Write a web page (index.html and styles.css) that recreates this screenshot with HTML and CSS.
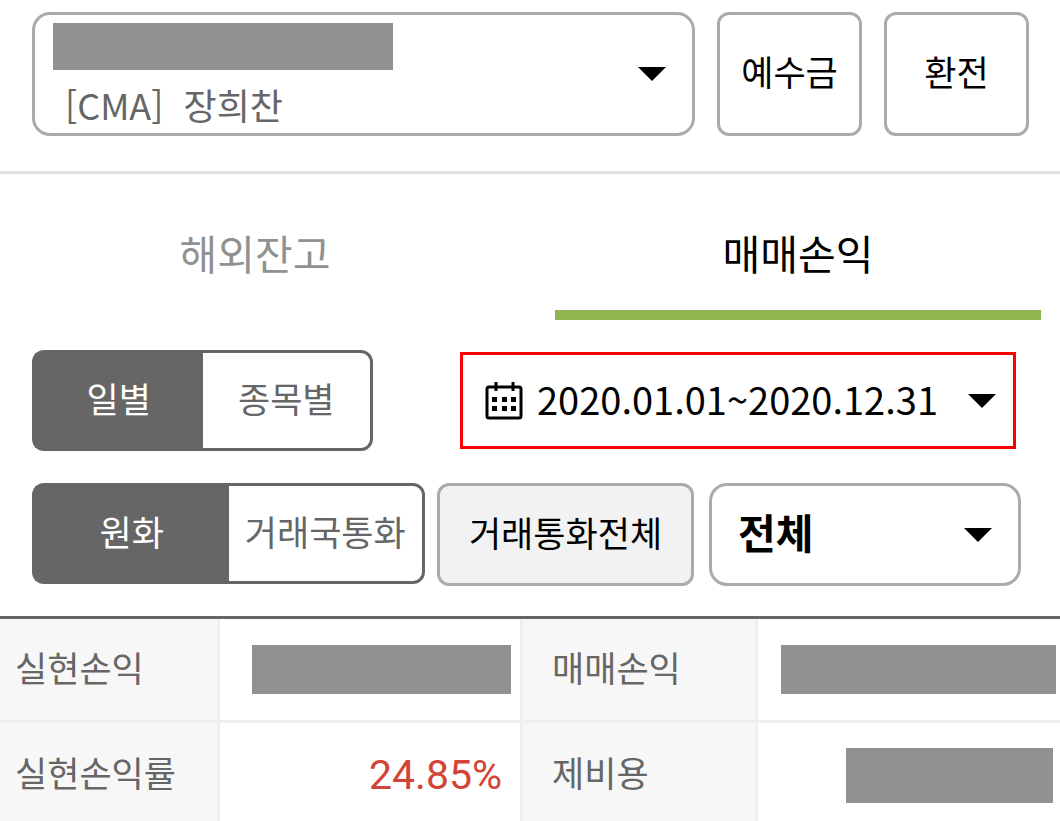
FILE: index.html
```
<!DOCTYPE html>
<html lang="ko">
<head>
  <meta charset="UTF-8" />
  <meta name="viewport" content="width=device-width, initial-scale=1" />
  <title>매매손익</title>
  <link rel="stylesheet" href="styles.css">
</head>
<body>
  <header class="account-bar">
    <div class="select-box account">
      <select class="account-select" aria-label="계좌 선택">
        <option>[CMA]&nbsp; 장희찬</option>
      </select>
      <span class="mask mask-account"></span>
      <svg class="caret" viewBox="0 0 28 14" aria-hidden="true"><path d="M0 0h28L14 14z" /></svg>
    </div>
    <button type="button" class="btn">예수금</button>
    <button type="button" class="btn">환전</button>
  </header>

  <nav class="tabs">
    <a href="#balance" class="tab">해외잔고</a>
    <a href="#profit" class="tab active">매매손익</a>
  </nav>

  <main>
    <div class="filters">
      <div class="filter-row">
        <div class="toggle toggle-period">
          <button type="button" class="on" aria-pressed="true">일별</button>
          <button type="button" aria-pressed="false">종목별</button>
        </div>
        <button type="button" class="date-range">
          <svg class="calendar" viewBox="0 0 38 38" aria-hidden="true">
            <rect x="2" y="5" width="34" height="31" rx="2" fill="none" stroke="#000" stroke-width="3" />
            <path d="M11 0v9M28 0v9" stroke="#000" stroke-width="3" />
            <path d="M7 15h5v5H7zM17 15h5v5h-5zM26 15h5v5h-5zM7 24h5v5H7zM17 24h5v5h-5zM26 24h5v5h-5z" />
          </svg>
          <span>2020.01.01~2020.12.31</span>
          <svg class="caret" viewBox="0 0 28 14" aria-hidden="true"><path d="M0 0h28L14 14z" /></svg>
        </button>
      </div>

      <div class="filter-row currency-row">
        <div class="toggle toggle-currency">
          <button type="button" class="on" aria-pressed="true">원화</button>
          <button type="button" aria-pressed="false">거래국통화</button>
        </div>
        <button type="button" class="btn btn-gray">거래통화전체</button>
        <div class="select-box market">
          <select class="market-select" aria-label="구분">
            <option>전체</option>
          </select>
          <svg class="caret" viewBox="0 0 28 14" aria-hidden="true"><path d="M0 0h28L14 14z" /></svg>
        </div>
      </div>
    </div>

    <table class="summary">
      <colgroup>
        <col class="col-label">
        <col class="col-value">
        <col class="col-label2">
        <col>
      </colgroup>
      <tr>
        <th scope="row">실현손익</th>
        <td><span class="mask mask-realized"></span></td>
        <th scope="row">매매손익</th>
        <td><span class="mask mask-trade"></span></td>
      </tr>
      <tr>
        <th scope="row">실현손익률</th>
        <td class="rate">24.85%</td>
        <th scope="row">제비용</th>
        <td><span class="mask mask-cost"></span></td>
      </tr>
    </table>
  </main>
</body>
</html>
```
FILE: styles.css
```
* {
  box-sizing: border-box;
  margin: 0;
  padding: 0;
}

body {
  font-family: "Noto Sans CJK KR", sans-serif;
  font-size: 35px;
  line-height: 48px;
  background-color: #fff;
  color: #000;
}

button,
select {
  font: inherit;
  color: inherit;
  background: none;
  border: none;
  cursor: pointer;
}

.caret {
  width: 28px;
  height: 14px;
  flex: none;
}

.mask {
  display: block;
  background-color: #919191;
}

/* account */
.account-bar {
  display: flex;
  gap: 22px;
  padding: 12px 31px 35px 32px;
  border-bottom: 3px solid #e0e0e0;
}

.select-box {
  display: grid;
  align-items: center;
  border: 3px solid #ababab;
  border-radius: 18px;
}

/* select, mask and caret share one cell */
.select-box > * {
  grid-area: 1 / 1;
}

.select-box select {
  appearance: none;
  width: 100%;
  height: 100%;
}

.select-box .caret {
  justify-self: end;
  margin-right: 26px;
  pointer-events: none;
}

.account {
  flex: 1;
  height: 124px;
}

.account .mask {
  align-self: start;
  margin: 8px 0 0 18px;
  pointer-events: none;
}

.account .account-select {
  padding: 62px 60px 2px 30px;
  font-size: 36px;
  color: #666;
}

.mask-account {
  width: 340px;
  height: 47px;
}

.btn {
  width: 145px;
  padding-bottom: 6px;
  border: 3px solid #ababab;
  border-radius: 12px;
}

/* tabs */
.tabs {
  display: flex;
  gap: 57px;
  padding: 0 19px 0 12px;
}

.tab {
  flex: 1;
  padding: 48px 0 28px;
  border-bottom: 10px solid transparent;
  font-size: 41px;
  line-height: 60px;
  text-align: center;
  text-decoration: none;
  color: #919191;
}

.tab.active {
  color: #000;
  border-color: #8eb550;
}

/* filters */
.filters {
  padding: 30px 39px 30px 32px;
}

.filter-row {
  display: flex;
  align-items: center;
  justify-content: space-between;
}

.toggle {
  display: flex;
  height: 101px;
  border: 3px solid #666;
  border-radius: 12px;
  background-color: #666;
  color: #666;
}

.toggle button {
  flex: 1;
  padding-bottom: 6px;
  border-radius: 0 9px 9px 0;
  background-color: #fff;
}

.toggle .on {
  border-radius: 0;
  background-color: #666;
  color: #fff;
}

.toggle-period {
  width: 341px;
}

.toggle-currency {
  width: 393px;
}

.date-range {
  display: flex;
  align-items: center;
  height: 97px;
  margin-right: 5px;
  padding: 0 17px 0 22px;
  border: 3px solid #f00;
  font-size: 38px;
}

.date-range span {
  padding-bottom: 4px;
}

.calendar {
  width: 38px;
  height: 38px;
  margin-right: 14px;
}

.date-range .caret {
  margin-left: 30px;
}

.currency-row {
  align-items: flex-start;
  gap: 12px;
  margin-top: 32px;
}

.btn-gray {
  width: 257px;
  height: 103px;
  background-color: #f2f2f2;
}

.market {
  flex: 1;
  height: 103px;
  margin-left: 3px;
}

.market-select {
  padding: 0 60px 8px 26px;
  font-size: 41px;
  font-weight: bold;
}

/* summary */
.summary {
  width: 100%;
  table-layout: fixed;
  border-collapse: separate;
  border-spacing: 0;
  border-top: 3px solid #666;
}

.col-label {
  width: 220px;
}

.col-value {
  width: 303px;
}

.col-label2 {
  width: 235px;
}

.summary th,
.summary td {
  height: 104px;
  border-right: 3px solid #efefef;
  border-bottom: 3px solid #efefef;
}

.summary th {
  padding: 0 0 6px 15px;
  background-color: #f7f7f7;
  font-weight: normal;
  text-align: left;
  color: #666;
}

.summary th:nth-child(3) {
  padding-left: 29px;
}

.summary td:last-child {
  border-right: none;
}

.summary tr:last-child th,
.summary tr:last-child td {
  height: 98px;
  border-bottom: none;
}

.summary tr:last-child td {
  padding-top: 6px;
}

.summary tr:last-child th {
  padding-bottom: 0;
}

.summary .mask {
  margin-left: auto;
}

.mask-realized {
  width: 259px;
  height: 49px;
  margin-right: 9px;
}

.mask-trade {
  width: 275px;
  height: 49px;
  margin-right: 4px;
}

.mask-cost {
  width: 207px;
  height: 55px;
  margin-right: 7px;
}

.summary .rate {
  padding-right: 18px;
  font-family: Roboto, sans-serif;
  font-size: 41px;
  text-align: right;
  color: #d24438;
}
```
